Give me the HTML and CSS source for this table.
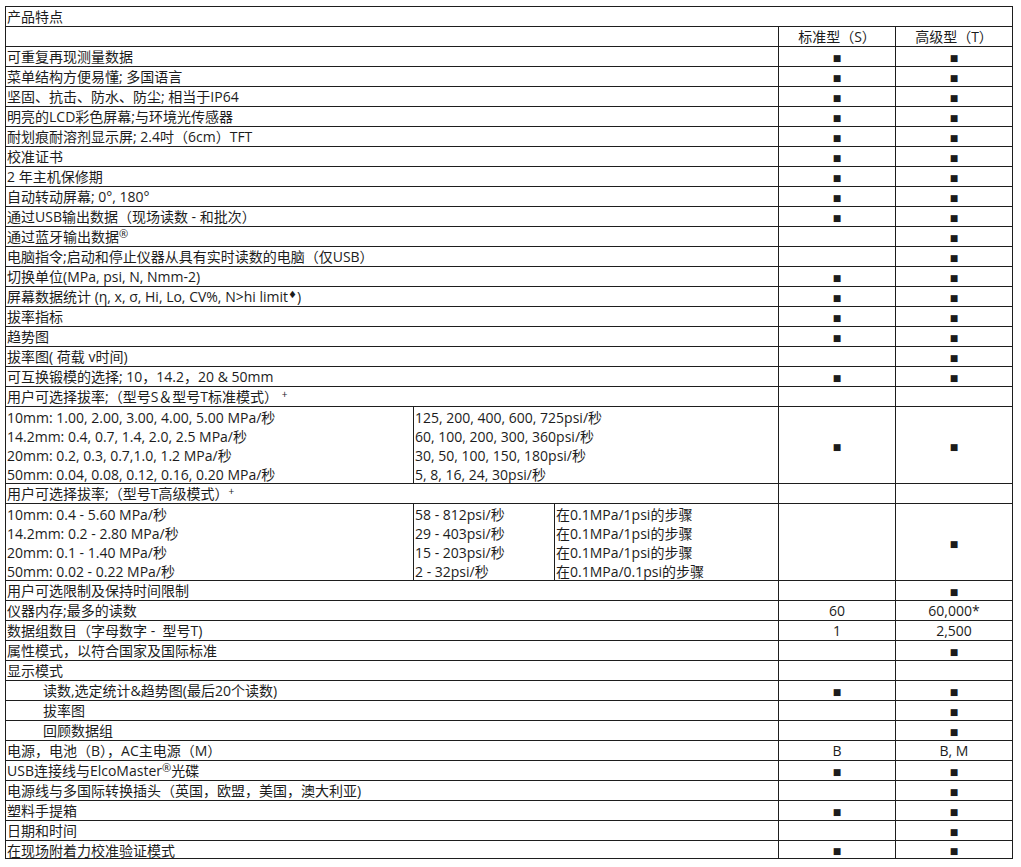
FILE: index.html
```html
<!DOCTYPE html>
<html lang="zh-CN">
<head>
<meta charset="utf-8">
<title>产品特点</title>
<link rel="stylesheet" href="styles.css">
</head>
<body>
<div class="spec">
  <div class="c s5">产品特点</div>

  <div class="c s3"></div><div class="m">标准型（S）</div><div class="m">高级型（T）</div>
  <div class="c s3">可重复再现测量数据</div><div class="m"><span class="sq">■</span></div><div class="m"><span class="sq">■</span></div>
  <div class="c s3">菜单结构方便易懂; 多国语言</div><div class="m"><span class="sq">■</span></div><div class="m"><span class="sq">■</span></div>
  <div class="c s3">坚固、抗击、防水、防尘; 相当于IP64</div><div class="m"><span class="sq">■</span></div><div class="m"><span class="sq">■</span></div>
  <div class="c s3">明亮的LCD彩色屏幕;与环境光传感器</div><div class="m"><span class="sq">■</span></div><div class="m"><span class="sq">■</span></div>
  <div class="c s3">耐划痕耐溶剂显示屏; 2.4吋（6cm）TFT</div><div class="m"><span class="sq">■</span></div><div class="m"><span class="sq">■</span></div>
  <div class="c s3">校准证书</div><div class="m"><span class="sq">■</span></div><div class="m"><span class="sq">■</span></div>
  <div class="c s3">2 年主机保修期</div><div class="m"><span class="sq">■</span></div><div class="m"><span class="sq">■</span></div>
  <div class="c s3">自动转动屏幕; 0°, 180°</div><div class="m"><span class="sq">■</span></div><div class="m"><span class="sq">■</span></div>
  <div class="c s3">通过USB输出数据（现场读数 - 和批次）</div><div class="m"><span class="sq">■</span></div><div class="m"><span class="sq">■</span></div>
  <div class="c s3">通过蓝牙输出数据<sup class="reg">®</sup></div><div class="m"></div><div class="m"><span class="sq">■</span></div>
  <div class="c s3">电脑指令;启动和停止仪器从具有实时读数的电脑（仅USB）</div><div class="m"></div><div class="m"><span class="sq">■</span></div>
  <div class="c s3">切换单位(MPa, psi, N, Nmm-2)</div><div class="m"><span class="sq">■</span></div><div class="m"><span class="sq">■</span></div>
  <div class="c s3">屏幕数据统计 (η, x, σ, Hi, Lo, CV%, N&gt;hi limit<sup class="dia">♦</sup>)</div><div class="m"><span class="sq">■</span></div><div class="m"><span class="sq">■</span></div>
  <div class="c s3">拔率指标</div><div class="m"><span class="sq">■</span></div><div class="m"><span class="sq">■</span></div>
  <div class="c s3">趋势图</div><div class="m"><span class="sq">■</span></div><div class="m"><span class="sq">■</span></div>
  <div class="c s3">拔率图( 荷载 v时间)</div><div class="m"></div><div class="m"><span class="sq">■</span></div>
  <div class="c s3">可互换锻模的选择; 10，14.2，20 &amp; 50mm</div><div class="m"><span class="sq">■</span></div><div class="m"><span class="sq">■</span></div>
  <div class="c s3">用户可选择拔率;（型号S＆型号T标准模式） <sup class="plus">+</sup></div><div class="m"></div><div class="m"></div>

  <div class="c blk">10mm: 1.00, 2.00, 3.00, 4.00, 5.00 MPa/秒<br>14.2mm: 0.4, 0.7, 1.4, 2.0, 2.5 MPa/秒<br>20mm: 0.2, 0.3, 0.7,1.0, 1.2 MPa/秒<br>50mm: 0.04, 0.08, 0.12, 0.16, 0.20 MPa/秒</div>
  <div class="c blk s2">125, 200, 400, 600, 725psi/秒<br>60, 100, 200, 300, 360psi/秒<br>30, 50, 100, 150, 180psi/秒<br>5, 8, 16, 24, 30psi/秒</div>
  <div class="m"><span class="sq">■</span></div><div class="m"><span class="sq">■</span></div>

  <div class="c s3">用户可选择拔率;（型号T高级模式）<sup class="plus">+</sup></div><div class="m"></div><div class="m"></div>

  <div class="c blk">10mm: 0.4 - 5.60 MPa/秒<br>14.2mm: 0.2 - 2.80 MPa/秒<br>20mm: 0.1 - 1.40 MPa/秒<br>50mm: 0.02 - 0.22 MPa/秒</div>
  <div class="c blk">58 - 812psi/秒<br>29 - 403psi/秒<br>15 - 203psi/秒<br>2 - 32psi/秒</div>
  <div class="c blk">在0.1MPa/1psi的步骤<br>在0.1MPa/1psi的步骤<br>在0.1MPa/1psi的步骤<br>在0.1MPa/0.1psi的步骤</div>
  <div class="m"></div><div class="m"><span class="sq">■</span></div>

  <div class="c s3">用户可选限制及保持时间限制</div><div class="m"></div><div class="m"><span class="sq">■</span></div>
  <div class="c s3">仪器内存;最多的读数</div><div class="m">60</div><div class="m">60,000*</div>
  <div class="c s3">数据组数目（字母数字 -&nbsp; 型号T)</div><div class="m">1</div><div class="m">2,500</div>
  <div class="c s3">属性模式，以符合国家及国际标准</div><div class="m"></div><div class="m"><span class="sq">■</span></div>
  <div class="c s3">显示模式</div><div class="m"></div><div class="m"></div>
  <div class="c s3 ind">读数,选定统计&amp;趋势图(最后20个读数)</div><div class="m"><span class="sq">■</span></div><div class="m"><span class="sq">■</span></div>
  <div class="c s3 ind">拔率图</div><div class="m"></div><div class="m"><span class="sq">■</span></div>
  <div class="c s3 ind">回顾数据组</div><div class="m"></div><div class="m"><span class="sq">■</span></div>
  <div class="c s3">电源，电池（B），AC主电源（M）</div><div class="m">B</div><div class="m">B, M</div>
  <div class="c s3">USB连接线与ElcoMaster<sup class="reg">®</sup>光碟</div><div class="m"><span class="sq">■</span></div><div class="m"><span class="sq">■</span></div>
  <div class="c s3">电源线与多国际转换插头（英国，欧盟，美国，澳大利亚)</div><div class="m"></div><div class="m"><span class="sq">■</span></div>
  <div class="c s3">塑料手提箱</div><div class="m"><span class="sq">■</span></div><div class="m"><span class="sq">■</span></div>
  <div class="c s3">日期和时间</div><div class="m"></div><div class="m"><span class="sq">■</span></div>
  <div class="c s3">在现场附着力校准验证模式</div><div class="m"><span class="sq">■</span></div><div class="m"><span class="sq">■</span></div>
</div>
</body>
</html>
```

FILE: styles.css
```css
html, body {
  margin: 0;
  padding: 0;
  background: #ffffff;
}

body {
  padding: 6px 0 0 5px;
  font-family: "Open Sans", "Noto Sans CJK SC", sans-serif;
  font-size: 14px;
  color: #1c1c1c;
}

.spec {
  display: grid;
  width: 1006px;
  grid-template-columns: 407px 140px 223px 116px 116px;
  grid-template-rows: repeat(20, 19px) 76px 19px 76px repeat(13, 19px) 17px;
  gap: 1px;
  padding: 1px;
  background: #1e1e1e;
}

.spec > div {
  background: #ffffff;
  line-height: 19px;
  white-space: nowrap;
}

.c {
  padding-left: 1px;
}

.s2 { grid-column: span 2; }
.s3 { grid-column: span 3; }
.s5 { grid-column: span 5; }

.ind {
  padding-left: 37px;
}

.blk {
  padding-top: 1px;
}

.m {
  display: flex;
  align-items: center;
  justify-content: center;
}

.sq {
  font-family: "DejaVu Sans", sans-serif;
  font-size: 9px;
  line-height: 1;
  position: relative;
  top: 2px;
}

sup {
  line-height: 0;
  vertical-align: 0;
  position: relative;
}

.reg {
  font-size: 11px;
  top: -4px;
}

.dia {
  font-family: "DejaVu Sans", sans-serif;
  font-size: 10px;
  top: -4px;
}

.plus {
  font-size: 10px;
  top: -4px;
}
```
